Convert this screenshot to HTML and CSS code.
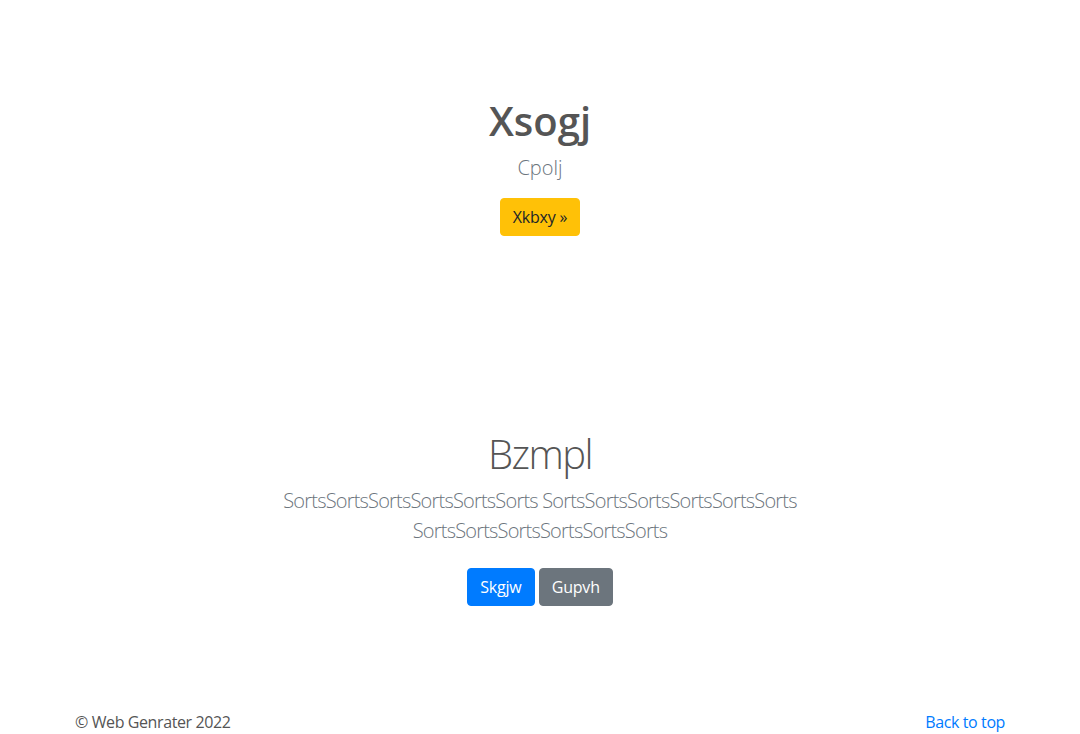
FILE: index.html
```html
<!DOCTYPE html>
<html lang="en">
<head>
<meta charset="utf-8">
<title>Xsogj</title>
<link rel="stylesheet" href="styles.css">
</head>
<body>
<main>
  <section class="hero">
    <h1 class="hero-title">Xsogj</h1>
    <p class="lead">Cpolj</p>
    <p class="actions"><a class="btn btn-warning" href="#">Xkbxy »</a></p>
  </section>
  <section class="album">
    <h1 class="album-title">Bzmpl</h1>
    <p class="lead">SortsSortsSortsSortsSortsSorts SortsSortsSortsSortsSortsSorts SortsSortsSortsSortsSortsSorts</p>
    <p class="actions">
      <a class="btn btn-primary" href="#">Skgjw</a>
      <a class="btn btn-secondary" href="#">Gupvh</a>
    </p>
  </section>
</main>
<footer class="footer">
  <div class="container footer-row">
    <span>© Web Genrater 2022</span>
    <a class="top-link" href="#">Back to top</a>
  </div>
</footer>
</body>
</html>
```

FILE: styles.css
```css
* { box-sizing: border-box; }
html, body { margin: 0; padding: 0; }
body {
  font-family: "Open Sans", "Noto Sans", "Liberation Sans", sans-serif;
  font-size: 16px;
  line-height: 1.5;
  color: #555;
  background: #fff;
}
a { text-decoration: none; }
h1 { margin: 0; line-height: 1.2; font-size: 40px; }
p { margin: 0; }

.hero {
  text-align: center;
  padding-top: 97px;
}
.hero-title { font-weight: 600; margin-bottom: 8px; }
.lead {
  font-size: 20px;
  font-weight: 300;
  line-height: 30px;
  color: #6c757d;
}
.hero .lead { margin-bottom: 15px; }

.album {
  text-align: center;
  width: 640px;
  margin: 0 auto;
  padding: 194px 15px 0;
}
.album-title { font-weight: 300; margin-bottom: 8px; letter-spacing: -1.5px; }
.album .lead { margin-bottom: 22px; letter-spacing: -0.8px; }
.album .actions { margin: 8px 0; }

.btn {
  display: inline-block;
  font-size: 16px;
  line-height: 24px;
  padding: 6px 12px;
  border-radius: 4px;
  border: 1px solid transparent;
  vertical-align: middle;
  letter-spacing: -0.2px;
}
.btn-warning { background: #ffc107; border-color: #ffc107; color: #212529; }
.btn-primary { background: #007bff; border-color: #007bff; color: #fff; }
.btn-secondary { background: #6c757d; border-color: #6c757d; color: #fff; }

.footer { padding-top: 96px; }
.container {
  width: 960px;
  margin: 0 auto;
  padding: 0 15px;
}
.footer-row {
  display: flex;
  justify-content: space-between;
  align-items: center;
  letter-spacing: -0.4px;
}
.top-link { color: #007bff; }
```
